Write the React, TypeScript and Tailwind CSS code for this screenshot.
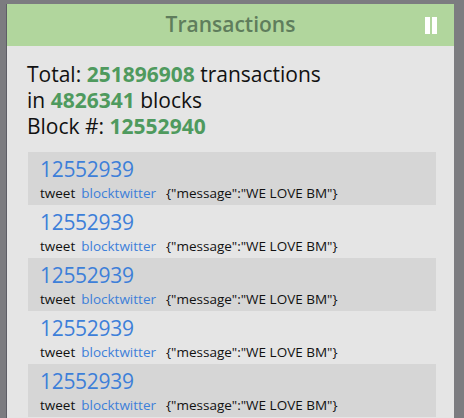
const rows = Array.from({ length: 5 }, (_, i) => ({
  block: "12552939",
  type: "tweet",
  account: "blocktwitter",
  data: '{"message":"WE LOVE BM"}',
  shaded: i % 2 === 0,
}));

export default function App() {
  return (
    <div
      className="w-[464px] h-[418px] overflow-hidden bg-[#7c7c80] pl-[6px] pt-[4px] pr-[10px]"
      style={{ fontFamily: '"Open Sans", "Noto Sans", sans-serif' }}
    >
      <div className="h-full bg-[#e5e5e5] border-l border-[#5e5e66]">
        <div className="relative h-[42px] bg-[#b1d69d] flex items-center justify-center">
          <h1 className="text-[21px] font-semibold text-[#5f7d5c]">Transactions</h1>
          <div className="absolute right-[17px] top-[13px] flex gap-[2px]">
            <span className="block w-[5px] h-[17px] bg-white" />
            <span className="block w-[5px] h-[17px] bg-white" />
          </div>
        </div>

        <div className="px-[20px] pt-[15px] text-[21px] leading-[26px] text-[#111]">
          <p>
            Total: <span className="font-bold text-[#4f9a5e]">251896908</span> transactions
          </p>
          <p>
            in <span className="font-bold text-[#4f9a5e]">4826341</span> blocks
          </p>
          <p>
            Block #: <span className="font-bold text-[#4f9a5e]">12552940</span>
          </p>
        </div>

        <div className="mt-[13px] ml-[21px] w-[408px]">
          {rows.map((r, i) => (
            <div
              key={i}
              className={`h-[53px] px-[12px] pt-[4px] ${r.shaded ? "bg-[#d6d6d6]" : ""}`}
            >
              <div className="text-[21px] leading-[26px] text-[#3d7fd9] tracking-[-0.3px]">{r.block}</div>
              <div className="mt-[2px] text-[13.5px] leading-[18px] text-[#111] flex">
                <span>{r.type}</span>
                <span className="ml-[6px] text-[#3d7fd9]">{r.account}</span>
                <span className="ml-[10px]">{r.data}</span>
              </div>
            </div>
          ))}
        </div>
      </div>
    </div>
  );
}
